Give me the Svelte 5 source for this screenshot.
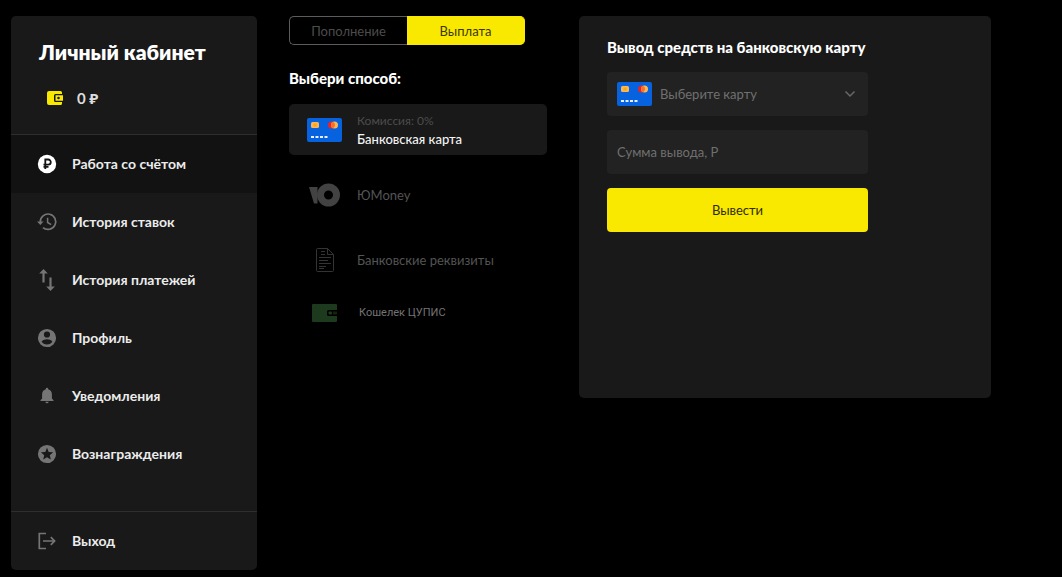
<script lang="ts">
  const menu = [
    { id: "account", title: "Работа со счётом" },
    { id: "bets", title: "История ставок" },
    { id: "payments", title: "История платежей" },
    { id: "profile", title: "Профиль" },
    { id: "notifications", title: "Уведомления" },
    { id: "rewards", title: "Вознаграждения" },
  ];

  const methods = [
    { id: "card", title: "Банковская карта", fee: "Комиссия: 0%" },
    { id: "yoomoney", title: "ЮMoney" },
    { id: "details", title: "Банковские реквизиты" },
    { id: "cupis", title: "Кошелек ЦУПИС" },
  ];

  let page = $state("account");
  let tab = $state("out");
  let method = $state("card");
  let card = $state("");
  let amount = $state("");
</script>

{#snippet bankCard()}
  <svg class="bank-card" viewBox="0 0 35 24" width="35" height="24" aria-hidden="true">
    <rect width="35" height="24" rx="2" fill="#0762e0" />
    <rect x="4" y="4" width="8" height="6" rx="1.500" fill="#ffb74d" />
    <path d="M6.500 5.500h3v3h-3z" fill="#f7a51c" />
    <circle cx="24.500" cy="7" r="3.500" fill="#e5252a" />
    <circle cx="27.500" cy="7" r="3.500" fill="#ffb74d" />
    <path d="M26 3.850a3.500 3.500 0 0 1 0 6.300a3.500 3.500 0 0 1 0-6.300z" fill="#f5702d" />
    <path d="M4 19h3M8.500 19h3M13 19h3M17.500 19h3" stroke="#e8f0ff" stroke-width="2" />
  </svg>
{/snippet}

{#snippet menuIcon(id: string)}
  <svg class="menu-icon" viewBox="0 0 20 20" width="20" height="20" fill="currentColor" aria-hidden="true">
    {#if id === "account"}
      <circle cx="10" cy="10" r="9.200" />
      <path d="M8.300 15V5.500h2.900a2.600 2.600 0 0 1 0 5.200H6.500M6.500 12.900h5" fill="none" stroke="#141414" stroke-width="1.800" />
    {:else if id === "bets"}
      <path d="M3.300 10A7.700 7.700 0 1 1 6 15.600" fill="none" stroke="currentColor" stroke-width="1.700" />
      <path d="M0 9.500h6.600L3.300 13z" />
      <path d="M10.600 5.800v4.700l3.600 2.200" fill="none" stroke="currentColor" stroke-width="1.500" />
    {:else if id === "payments"}
      <path d="M6.500-1l4.300 4.400H7.600V12.500H5.400V3.400H2.200z" />
      <path d="M13.500 21l4.300-4.400h-3.200V7.500h-2.200v9.100H9.200z" />
    {:else if id === "profile"}
      <path fill-rule="evenodd" d="M10 .9a9.100 9.100 0 1 0 0 18.200A9.100 9.100 0 0 0 10 .9zm0 2.500a3.100 3.100 0 1 1 0 6.200 3.100 3.100 0 0 1 0-6.200zM4.600 13.400c1.200-1.400 3.600-2.100 5.400-2.100s4.200.7 5.400 2.100c-1 1.900-3 3-5.400 3s-4.400-1.100-5.400-3z" />
    {:else if id === "notifications"}
      <path d="M8.800 3.200V2.900a1.200 1.200 0 0 1 2.400 0v.3c2.300.6 3.700 2.600 3.700 5V12.500l1.600 1.700v.9h-13v-.9l1.600-1.700V8.200c0-2.400 1.400-4.400 3.700-5zM8.400 15.700h3.200a1.600 1.600 0 0 1-3.200 0z" />
    {:else if id === "rewards"}
      <path fill-rule="evenodd" d="M10 .9a9.100 9.100 0 1 0 0 18.200A9.100 9.100 0 0 0 10 .9zm0 2.900 1.700 4.100 4.400.4-3.300 2.900 1 4.300-3.800-2.300-3.800 2.300 1-4.300-3.300-2.900 4.400-.4z" />
    {:else}
      <path d="M9 2.500H2.300v15H9M6 10h11.500M13.800 6.200l3.800 3.800-3.800 3.800" fill="none" stroke="currentColor" stroke-width="1.700" />
    {/if}
  </svg>
{/snippet}

<main class="cabinet">
  <aside class="sidebar">
    <header>
      <h1>Личный кабинет</h1>
      <div class="balance">
        <svg viewBox="0 0 17 14" width="17" height="14" aria-hidden="true">
          <path fill="#f9e800" d="M2 0h11.500A1.500 1.500 0 0 1 15 1.500V3H8.500A1.500 1.500 0 0 0 7 4.500v5A1.500 1.500 0 0 0 8.500 11H15v1.500a1.500 1.500 0 0 1-1.500 1.500H2a2 2 0 0 1-2-2V2a2 2 0 0 1 2-2z" />
          <path fill="#f9e800" fill-rule="evenodd" d="M8.500 4.300H16v5.400H8.500zM11.500 5.700a1.300 1.300 0 1 0 0 2.600 1.300 1.300 0 0 0 0-2.600z" />
        </svg>
        <span>0 ₽</span>
      </div>
    </header>
    <nav>
      {#each menu as item}
        <a href="#{item.id}" class="menu-item" class:active={page === item.id} onclick={() => (page = item.id)}>
          {@render menuIcon(item.id)}
          {item.title}
        </a>
      {/each}
    </nav>
    <a href="#logout" class="menu-item logout">
      {@render menuIcon("logout")}
      Выход
    </a>
  </aside>

  <section class="choice">
    <div class="tabs">
      <button type="button" class:active={tab === "in"} onclick={() => (tab = "in")}>Пополнение</button>
      <button type="button" class:active={tab === "out"} onclick={() => (tab = "out")}>Выплата</button>
    </div>
    <h2>Выбери способ:</h2>
    <div class="methods">
      {#each methods as item}
        <button
          type="button"
          class="method {item.id}"
          class:active={method === item.id}
          aria-pressed={method === item.id}
          onclick={() => (method = item.id)}
        >
          <span class="method-icon">
            {#if item.id === "card"}
              {@render bankCard()}
            {:else if item.id === "yoomoney"}
              <svg viewBox="0 0 31 24" width="31" height="24" fill="#424242" aria-hidden="true">
                <path d="M0 4h8.500v16.500H5z" />
                <path fill-rule="evenodd" d="M19.500.5a11.500 11.500 0 1 0 0 23 11.500 11.500 0 0 0 0-23zm0 7a4.500 4.500 0 1 1 0 9 4.500 4.500 0 0 1 0-9z" />
              </svg>
            {:else if item.id === "details"}
              <svg viewBox="0 0 18 24" width="18" height="24" fill="none" stroke="#343434" aria-hidden="true">
                <path d="M1.500.5h10l6 6v16a1 1 0 0 1-1 1h-15a1 1 0 0 1-1-1v-21a1 1 0 0 1 1-1zM11.500.5v6h6" />
                <path d="M5 3.500h4M5 6.500h4M3 9.500h12M3 12.500h9M3 15.500h12M3 18.500h7M3 20.500h5" />
              </svg>
            {:else}
              <svg viewBox="0 0 25 18" width="25" height="18" aria-hidden="true">
                <path fill="#1d3a1f" d="M1 0h23a1 1 0 0 1 1 1v5h-8.500A1.500 1.500 0 0 0 15 7.500v3a1.500 1.500 0 0 0 1.500 1.500H25v5a1 1 0 0 1-1 1H1a1 1 0 0 1-1-1V1a1 1 0 0 1 1-1z" />
                <rect x="16.500" y="7.500" width="3.500" height="3" rx="1" fill="#1d3a1f" />
                <path fill="#12220f" d="M21 7.500h4v3h-4z" />
              </svg>
            {/if}
          </span>
          <span class="method-text">
            {#if item.fee}<small>{item.fee}</small>{/if}
            <span>{item.title}</span>
          </span>
        </button>
      {/each}
    </div>
  </section>

  <section class="payout">
    <form onsubmit={(e) => e.preventDefault()}>
      <h2>Вывод средств на банковскую карту</h2>
      <div class="field">
        {@render bankCard()}
        <select bind:value={card} aria-label="Выберите карту">
          <option value="">Выберите карту</option>
        </select>
        <svg class="chevron" viewBox="0 0 10 6" width="10" height="6" aria-hidden="true">
          <path d="M.5.500 5 5 9.500.5" fill="none" stroke="#686868" stroke-width="1.500" />
        </svg>
      </div>
      <div class="field">
        <input type="text" bind:value={amount} placeholder="Сумма вывода, Р" aria-label="Сумма вывода, Р" />
      </div>
      <button type="submit">Вывести</button>
    </form>
  </section>
</main>

<style>
  :global(body) {
    background: #000;
  }

  .cabinet {
    display: grid;
    grid-template-columns: 246px 258px 1fr;
    align-items: start;
    gap: 32px;
    padding: 16px 71px 7px 11px;
    font-family: Lato, "Noto Sans", sans-serif;
    font-size: 13px;
    line-height: 18px;
    color: #fff;
  }

  h1,
  h2 {
    margin: 0;
    font-weight: 900;
  }

  h2 {
    font-size: 15px;
    line-height: 18px;
  }

  button,
  input,
  select {
    font: inherit;
    border: 0;
    padding: 0;
    margin: 0;
  }

  button {
    cursor: pointer;
  }

  svg {
    display: block;
    flex: none;
    overflow: visible;
  }

  .sidebar {
    background: #191919;
    border-radius: 5px;
    overflow: hidden;
  }

  header {
    padding: 22px 28px 26px;
    border-bottom: 1px solid #2e2e2e;
  }

  h1 {
    font-size: 21px;
    font-weight: 800;
    line-height: 28px;
    white-space: nowrap;
  }

  .balance {
    display: flex;
    align-items: center;
    gap: 13px;
    margin-top: 22px;
    padding-left: 8px;
    font-size: 15px;
    line-height: 20px;
    font-weight: 700;
    color: #ddd;
  }

  nav {
    padding-bottom: 28px;
  }

  .menu-item {
    display: flex;
    align-items: center;
    gap: 15px;
    height: 58px;
    padding: 0 26px;
    font-size: 14px;
    font-weight: 700;
    color: #ececec;
    text-decoration: none;
  }

  .menu-item.active {
    background: #121212;
  }

  .menu-icon {
    color: #757575;
  }

  .active .menu-icon {
    color: #fff;
  }

  .logout {
    border-top: 1px solid #2e2e2e;
  }

  .tabs {
    display: grid;
    grid-template-columns: 1fr 1fr;
    width: 236px;
    margin-bottom: 24px;
  }

  .tabs button {
    height: 29px;
    color: #4c4c4c;
    background: #000;
    border: 1px solid #5c5c5c;
  }

  .tabs button:first-child {
    border-right: 0;
    border-radius: 5px 0 0 5px;
  }

  .tabs button:last-child {
    border-left: 0;
    border-radius: 0 5px 5px 0;
  }

  .tabs button.active {
    color: #3b3707;
    background: #f9e800;
    border-color: #f9e800;
  }

  .methods {
    display: grid;
    gap: 14px;
    margin-top: 17px;
  }

  .method {
    display: flex;
    align-items: center;
    gap: 14px;
    height: 51px;
    padding: 0 17px;
    background: none;
    border-radius: 5px;
    color: #545454;
    text-align: left;
  }

  .method.active {
    background: #191919;
    color: #f4f4f4;
    font-weight: 500;
  }

  .method-icon {
    display: flex;
    justify-content: center;
    width: 37px;
  }

  .method-text {
    display: grid;
  }

  .method small {
    font-size: 12px;
    font-weight: 400;
    color: #4c4c4c;
  }

  .method.cupis {
    height: 28px;
    gap: 16px;
    font-family: Roboto, sans-serif;
    font-size: 11px;
    color: #747474;
  }

  .payout {
    min-height: 326px;
    padding: 22px 28px 34px;
    background: #191919;
    border-radius: 5px;
  }

  form {
    display: grid;
    gap: 14px;
    max-width: 261px;
  }

  form h2 {
    margin-bottom: 2px;
  }

  .field {
    display: flex;
    align-items: center;
    gap: 8px;
    height: 44px;
    padding: 0 10px;
    background: #222;
    border-radius: 4px;
  }

  .field select,
  .field input {
    flex: 1;
    min-width: 0;
    appearance: none;
    background: none;
    color: #707070;
  }

  .field input::placeholder {
    color: #707070;
    opacity: 1;
  }

  .chevron {
    margin-right: 3px;
  }

  form button {
    height: 44px;
    color: #2f2c06;
    background: #f9e800;
    border-radius: 4px;
  }
</style>
